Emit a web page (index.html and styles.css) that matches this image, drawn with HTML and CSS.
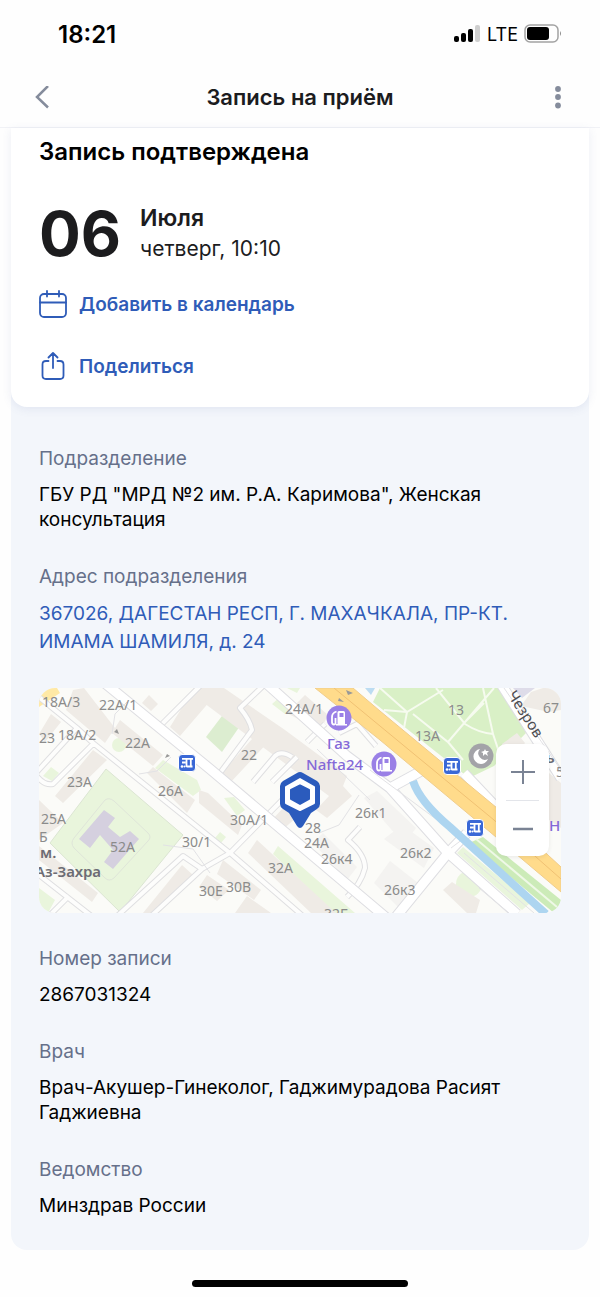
FILE: index.html
```html
<!DOCTYPE html>
<html lang="ru">
<head>
<meta charset="utf-8">
<meta name="viewport" content="width=device-width, initial-scale=1">
<title>Запись на приём</title>
<link rel="stylesheet" href="styles.css">
</head>
<body>
<div class="status">
  <time class="status-time">18:21</time>
  <div class="status-right">
    <svg class="signal" viewBox="0 0 28 18" width="28" height="18" aria-hidden="true">
      <rect x="1" y="11" width="5" height="6" rx="2"/>
      <rect x="8" y="8" width="5" height="9" rx="2"/>
      <rect x="15" y="4" width="5" height="13" rx="2"/>
      <rect x="22" y="0" width="5" height="17" rx="2" fill="#cfcfcf"/>
    </svg>
    <span class="network">LTE</span>
    <svg viewBox="0 0 38 20" width="38" height="20" aria-hidden="true">
      <rect x="1" y="1" width="33" height="17" rx="5" fill="none" stroke="#a3a3a3" stroke-width="1.5"/>
      <rect x="3" y="3" width="22" height="13" rx="3"/>
      <path d="M36 7q2 2.500 0 5z" fill="#8c8c8c"/>
    </svg>
  </div>
</div>
<header class="bar">
  <button class="icon-button" aria-label="Назад">
    <svg viewBox="0 0 16 24" width="16" height="24" aria-hidden="true"><path d="M14 0 3 11 14 21.500" fill="none" stroke="#858c9c" stroke-width="2.500"/></svg>
  </button>
  <h1 class="bar-title">Запись на приём</h1>
  <button class="icon-button" aria-label="Меню">
    <svg viewBox="0 0 6 24" width="6" height="24" fill="#858c9c" aria-hidden="true"><circle cx="3" cy="3" r="2.900"/><circle cx="3" cy="11" r="2.900"/><circle cx="3" cy="19.500" r="2.900"/></svg>
  </button>
</header>
<main class="page">
  <section class="card">
    <h2 class="card-title">Запись подтверждена</h2>
    <div class="date">
      <span class="day">06</span>
      <div>
        <div class="month">Июля</div>
        <div class="weekday">четверг, 10:10</div>
      </div>
    </div>
    <button class="action">
      <svg viewBox="0 0 28 28" width="28" height="28" fill="none" stroke="#2f5cb8" stroke-width="1.800" stroke-linecap="round" aria-hidden="true"><rect x="1" y="4" width="26" height="23" rx="4"/><path d="M1 12.500h26M8 1v5.500M20 1v5.500"/></svg>
      Добавить в календарь
    </button>
    <button class="action">
      <svg viewBox="0 0 28 28" width="28" height="28" fill="none" stroke="#2f5cb8" stroke-width="1.800" stroke-linecap="round" stroke-linejoin="round" aria-hidden="true"><path d="M9.500 9H7q-3.500 0-3.500 3.500v11Q3.500 27 7 27h14q3.500 0 3.500-3.500v-11Q24.500 9 21 9h-2.500M14 16V1M9.500 5.500 14 1l4.500 4.500"/></svg>
      Поделиться
    </button>
  </section>
  <dl class="details">
    <div class="field"><dt>Подразделение</dt><dd>ГБУ РД "МРД №2 им. Р.А. Каримова", Женская консультация</dd></div>
    <div class="field"><dt>Адрес подразделения</dt><dd><a class="address" href="#map">367026, ДАГЕСТАН РЕСП, Г. МАХАЧКАЛА, ПР-КТ. ИМАМА ШАМИЛЯ, д. 24</a>
      <div class="map" id="map">
        <svg class="map-canvas" viewBox="0 0 522 225" preserveAspectRatio="xMidYMid slice" role="img" aria-label="Карта">
          <defs>
            <g id="stop"><rect x="-8.500" y="-8.500" width="17" height="17" rx="3.500" fill="#3a68d6" stroke="#fff"/><path d="M-5-4.200H6M-5-.5h3.500M3.800-4v8M-.5-4v8M-.5 3.500h6" fill="none" stroke="#fff" stroke-width="1.800"/><circle cx="-5" cy="3.500" r="1.300" fill="#fff"/><circle cx="-2.500" cy="3.500" r="1" fill="#fff"/></g>
            <g id="fuel"><circle r="12.500" fill="#9a80e6"/><path d="M-1.500 6V-5.500Q-1.500-7 0-7H4.500Q6-7 6-5.500V6H8V7.500H-3V6z" fill="#fff"/><rect x="0.500" y="-5" width="4" height="4" fill="#9a80e6"/><path d="M-2.500-6.500Q-7-5-7-1V4q0 2.500 2 2.500T-3.500 4V0" fill="none" stroke="#fff" stroke-width="1.800"/></g>
            <g id="streets" fill="none" stroke-linejoin="round">
              <path d="M-5 5 38 40 54 55 171 149 191 165 265 229M-4 86 38 40M-4 86Q5 98 14 96L54 56M76 230 144 168 163 181 191 165 250 105M110 230 163 181M0 187 55 230M8 230 30 208M121 38 163-4M224-2 201 20Q211 32 213 42L178 89M214 94 236 68Q242 62 253 69M233 94 258 69M321 139 309 152Q326 166 326 180 322 196 308 209M268 54 286 36M300 45 318 36 337 58"/>
            </g>
            <g id="roads" fill="none" stroke-linejoin="round">
              <path d="M62-8 171 81 350 232M228-4 308 68 351 100 409 165 478 226M351 100 384 82M409 165 356 230M409 165 428 145M462-4 522 90M425 85 458 120"/>
            </g>
          </defs>
          <rect width="522" height="225" fill="#fbfbf8"/>
          <g fill="#e9f5dc">
            <path d="M67 81 144 147 81 224 11 155zM124 72 158 92 162 102 154 108 116 80zM239 158 316 225H294L234 166zM233 16 241 9 252 19 246 26zM248 0h13l-3 5zM4 88l8-9 8 6-7 8z"/>
            <path d="M185 110 195 109 206 122 198 128zM176 150l5-6 6 5-5 6zM424 159 491 215 483 222 418 165zM0 200l16 12-7 13H0z"/>
            <circle cx="80" cy="57" r="7"/><circle cx="430" cy="196" r="13"/>
          </g>
          <path d="M186 24 203 35 183 64 167 49z" fill="#dcedd0"/>
          <path d="M341 0H462L487 45 455 78 430 90 334 14z" fill="#d9f0c6"/>
          <path d="M341 0 368 24 404 2M368 24 365 40M374 26 409 54 455 0M409 54 424 72M397 0 426 36Q440 45 454 46L462 70M444 0 454 46M425 35 445 15M345 22 368 24" fill="none" stroke="#f6fbef" stroke-width="2"/>
          <g fill="#efebe6">
            <path d="M34 2 45 0 76 40 66 55 27 22zM81 32 124 67 114 78 73 45zM155 0h18l-1 12-31 36-10-9zM54 62 68 72 24 115 16 108zM108 85 114 79 156 112 148 125zM0 112 24 135 0 152zM0 158 59 205 53 214 0 172zM143 177 154 187 118 225H104z"/>
            <path d="M0 46 12 26 22 34 6 54zM103 15l7-8 9 9-7 7zM161 0H185L246 42 308 88 304 98 313 108 288 130 277 122 290 108 240 71 225 60 161 12zM221 42 233 50 191 95 180 88zM266 7 289 27 281 43 248 25zM160 102 169 105 203 137 199 147 160 115z"/>
            <path d="M233 132 244 120 258 129 241 144zM218 152 297 225H272L209 165zM184 172 222 202 215 212 178 186zM168 187 190 202 178 213 160 199zM208 208 232 225H196zM404 202 413 194 441 212 437 225H428zM482 18l10-14 12-4h18v22l-12 2zM463 56l15-11 8 10-20 24zM490 95l20-10 12 10v45l-12-8z"/>
          </g>
          <g fill="#f4f3f1"><path d="M325 110 338 103 377 140 365 156zM274 155 284 145 318 179 308 192zM345 151l18-14 32 23-10 20zM335 195l16-22 28 22-18 26z"/></g>
          <path d="M65 122 76 130 69 139 81 149 91 143 100 151 74 181 65 174 74 162 61 147 51 160 40 151z" fill="#d5d0df"/>
          <path d="M66 112q4-3 9 1l34 32q4 4 0 8l-34 37q-5 4-9 0L35 160q-4-5 0-10z" fill="none" stroke="#dfe5d9"/>
          <path d="M67 81 144 147 81 224 11 155z" fill="none" stroke="#dbe5d2"/>
          <path d="M0 0H18L21 5 0 19z" fill="#ffe9a6"/>
          <path d="M326 0h10l-4 7z" fill="#bcdcf2"/>
          <path d="M474 0h22l-13 10z" fill="#dedce9"/>
          <use href="#streets" stroke="#dfdfe1" stroke-width="6"/>
          <use href="#streets" stroke="#fdfdfc" stroke-width="4"/>
          <use href="#roads" stroke="#dedee2" stroke-width="11"/>
          <use href="#roads" stroke="#fff" stroke-width="9"/>
          <path d="M73 46l3-20 12-12M100 86l18-3 14-14M124 157l30 4 17 24M331 112 278 61M331 82 409 140M280 145l20-8 20-30M440 200l30 25M412 160 424 151M425 165 495 225M465 0 522 82" fill="none" stroke="#e2e2e5"/>
          <path d="M444 149 522 212V225H515L430 155z" fill="#ccebb8"/>
          <path d="M437 151 518 219" stroke="#eff8e7" stroke-width="2"/>
          <path d="M374 93Q381 114 411 139L507 226" fill="none" stroke="#add5f0" stroke-width="8"/>
          <path d="M276 0H314L341 23 458 120 522 179V204L451 144 341 52z" fill="#ffdb8b" stroke="#f0cd8c"/>
          <path d="M295 0 341 38 455 132 522 191" fill="none" stroke="#f0c173"/>
          <g fill="#999"><path d="M307 2l7 3-5 2zM300 10l5 4-6-1zM78 41l2 5-5-2zM128 66l3 2-5 2z"/></g>
          <g class="house">
            <text x="3" y="19">18А/3</text><text x="60" y="22">22А/1</text><text x="0" y="55">23</text><text x="19" y="52">18А/2</text>
            <text x="86" y="60">22А</text><text x="28" y="99">23А</text><text x="119" y="108">26А</text><text x="2" y="136">25А</text>
            <text x="0" y="154">Б</text><text x="71" y="164">52А</text><text x="143" y="159">30/1</text><text x="246" y="26">24А/1</text>
            <text x="202" y="72">22</text><text x="191" y="137">30А/1</text><text x="266" y="145">28</text><text x="265" y="160">24А</text>
            <text x="282" y="176">26к4</text><text x="229" y="185">32А</text><text x="160" y="208">30Е</text><text x="187" y="204">30В</text>
            <text x="316" y="130">26к1</text><text x="409" y="27">13</text><text x="376" y="53">13А</text><text x="361" y="170">26к2</text>
            <text x="345" y="207">26к3</text><text x="504" y="25">67</text><text x="285" y="231">32Б</text><text x="517" y="89">5</text>
          </g>
          <g class="place"><text x="1" y="170">м.</text><text x="-4" y="189">Аз-Захра</text><text x="507" y="75">ь</text></g>
          <g class="shop"><text x="288" y="61">Газ</text><text x="267" y="82">Nafta24</text><text x="510" y="143">Н</text></g>
          <text class="street" transform="translate(468 7) rotate(57)">Чезров</text>
          <use href="#stop" x="148" y="75"/><use href="#stop" x="413" y="78"/><use href="#stop" x="436" y="140"/>
          <use href="#fuel" x="300" y="30"/><use href="#fuel" x="345" y="76"/>
          <circle cx="442" cy="68" r="12.500" fill="#a3a3a8"/>
          <path d="M441 61a7.500 7.500 0 1 0 8 10 6.500 6.500 0 0 1-8-10z" fill="#fff"/><path d="m446 61 1 2 3 0-2 2 1 3-3-2-2 2 0-3-2-1 3-1z" fill="#fff"/>
          <path d="M258 85Q261 83 264 85L278 93Q281 95 281 98V116Q281 119 278 121L272 125 264 138Q261 142 258 138L250 125 244 121Q241 119 241 116V98Q241 95 244 93z" fill="#2b5bbd"/>
          <path d="M261 91 275 99V115L261 122 247 115V99z" fill="#fff" stroke="#fff" stroke-width="2" stroke-linejoin="round"/>
          <path d="M261 97.500 270 102V111L261 116 252 111V102z" fill="#2b5bbd" stroke="#2b5bbd" stroke-width="2" stroke-linejoin="round"/>
        </svg>
        <div class="zoom">
          <button class="zoom-button" aria-label="Приблизить"><svg viewBox="0 0 26 26" width="26" height="26" aria-hidden="true"><path d="M13 1v24M1 13h24" stroke="#7a8394" stroke-width="2"/></svg></button>
          <button class="zoom-button" aria-label="Отдалить"><svg viewBox="0 0 26 26" width="26" height="26" aria-hidden="true"><path d="M3 13h20" stroke="#7a8394" stroke-width="2.500"/></svg></button>
        </div>
      </div></dd>
    </div>
    <div class="field"><dt>Номер записи</dt><dd>2867031324</dd></div>
    <div class="field"><dt>Врач</dt><dd>Врач-Акушер-Гинеколог, Гаджимурадова Расият Гаджиевна</dd></div>
    <div class="field"><dt>Ведомство</dt><dd>Минздрав России</dd></div>
  </dl>
</main>
<div class="home"></div>
</body>
</html>
```

FILE: styles.css
```css
* { box-sizing: border-box; }
body {
  margin: 0;
  background: #fefefe;
  color: #000;
  font: 400 19px/25px Inter, "Liberation Sans", sans-serif;
}
h1, h2, dl, dd { margin: 0; }
button { border: 0; padding: 0; background: none; font: inherit; cursor: pointer; }
svg { display: block; flex: none; }

.status {
  display: flex;
  align-items: center;
  justify-content: space-between;
  height: 68px;
  padding: 0 38px 0 58px;
}
.status-time { font-size: 24px; font-weight: 600; }
.status-right { display: flex; align-items: center; gap: 6px; }
.network { font-size: 18px; }

.bar {
  display: flex;
  align-items: center;
  justify-content: space-between;
  height: 60px;
  padding: 0 28px;
  border-bottom: 1px solid #f1f2f6;
}
.icon-button { display: grid; place-items: center; width: 28px; height: 40px; }
.bar-title { font-size: 22px; font-weight: 600; color: #1c1c1e; }

.page { margin: 0 11px; background: #f3f6fb; border-radius: 0 0 16px 16px; }
.card {
  padding: 8px 28px 26px;
  background: #fff;
  border-radius: 0 0 16px 16px;
  box-shadow: 0 2px 10px #5064a01c;
}
.card-title { font-size: 24px; line-height: 32px; font-weight: 600; }
.date { display: flex; align-items: center; gap: 19px; margin: 35px 0 24px; color: #1c1c1e; }
.day { font-size: 62px; line-height: 62px; font-weight: 700; }
.month { font-size: 23px; line-height: 30px; font-weight: 600; }
.weekday { font-size: 21px; line-height: 32px; }
.action {
  display: flex;
  align-items: center;
  gap: 12px;
  height: 30px;
  color: #2f5cb8;
  font-weight: 600;
}
.action + .action { margin-top: 32px; }

.details { display: grid; gap: 32px; padding: 39px 28px 32px; }
.field { display: grid; gap: 11px; }
dt { color: #66708a; }
.address { display: block; color: #2f5cb8; line-height: 28px; text-decoration: none; }

.map { position: relative; margin: 32px 0 1px; border-radius: 16px; overflow: hidden; }
.map-canvas { width: 100%; height: 225px; }
.map-canvas text { font-family: "Noto Sans", sans-serif; }
.house { font-size: 14px; fill: #8b8b8b; }
.place { font-size: 15px; font-weight: 600; fill: #6c6c74; }
.shop { font-size: 15px; font-weight: 500; fill: #8468d8; }
.street { font-size: 15px; fill: #4c4c50; }
.zoom {
  position: absolute;
  top: 56px;
  right: 12px;
  width: 53px;
  padding: 0 10px;
  border-radius: 10px;
  background: #fff;
  box-shadow: 0 1px 4px #00000014;
}
.zoom-button { display: grid; place-items: center; width: 100%; height: 56px; }
.zoom-button + .zoom-button { border-top: 1px solid #e3e5ea; }

.home { width: 36%; height: 7px; margin: 30px auto 10px; border-radius: 4px; background: #000; }
```
